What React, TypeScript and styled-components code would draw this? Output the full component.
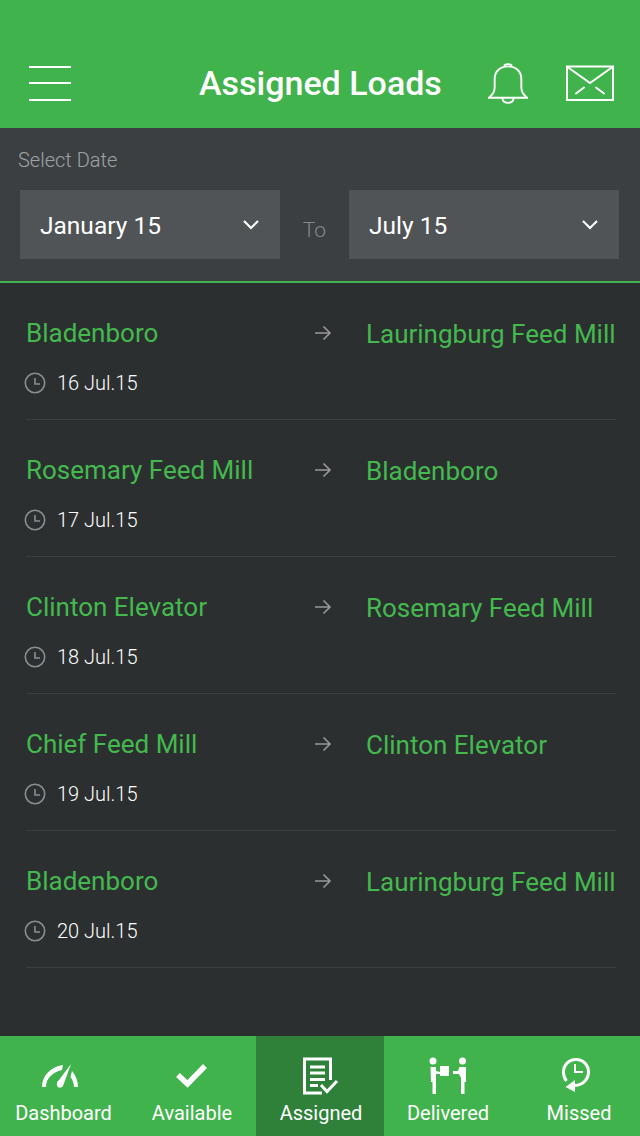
import styled, { createGlobalStyle } from 'styled-components';

const Global = createGlobalStyle`
  html, body {
    margin: 0;
    padding: 0;
    background: #2c2f30;
    font-family: Roboto, "Liberation Sans", sans-serif;
  }
  * { box-sizing: border-box; }
`;

const S = {
  Page: styled.div`
    width: 640px;
    height: 1136px;
    display: flex;
    flex-direction: column;
    overflow: hidden;
    background: #2c2f30;
  `,
  Header: styled.header`
    flex: 0 0 128px;
    background: #41b34c;
    display: grid;
    grid-template-columns: 166px 1fr 96px;
    align-items: center;
    padding: 38px 26px 0 29px;
    color: #fff;
  `,
  Burger: styled.div`
    width: 42px;
    height: 35px;
    display: flex;
    flex-direction: column;
    justify-content: space-between;
    span {
      height: 2px;
      background: #fff;
    }
  `,
  Title: styled.h1`
    margin: 0;
    font-size: 34px;
    font-weight: 500;
    line-height: 40px;
    white-space: nowrap;
    padding-left: 4px;
  `,
  HeaderIcons: styled.div`
    display: flex;
    justify-content: space-between;
    align-items: center;
    margin-left: -30px;
    width: 126px;
  `,
  Filter: styled.section`
    flex: 0 0 155px;
    background: #3b3f42;
    border-bottom: 2px solid #41b34c;
    padding: 20px 21px 0 18px;
  `,
  FilterLabel: styled.div`
    font-size: 20px;
    font-weight: 300;
    line-height: 24px;
    color: #a0a3a5;
  `,
  FilterRow: styled.div`
    display: grid;
    grid-template-columns: 260px 69px 270px;
    margin: 18px 0 0 2px;
    height: 69px;
  `,
  Select: styled.div`
    background: #505456;
    display: flex;
    align-items: center;
    justify-content: space-between;
    padding: 2px 20px 0 20px;
    font-size: 24.5px;
    color: #fff;
  `,
  ToLabel: styled.div`
    font-size: 21px;
    font-weight: 300;
    color: #85898b;
    text-align: center;
    align-self: center;
    padding-top: 11px;
  `,
  List: styled.main`
    flex: 1;
    padding: 0 24px 0 26px;
  `,
  Row: styled.article`
    height: 137px;
    border-bottom: 1px solid #3b3f41;
    display: grid;
    grid-template-columns: 340px 1fr;
    grid-template-rows: 66px 34px;
    align-content: start;
    padding-top: 17px;
  `,
  Origin: styled.div`
    position: relative;
    font-size: 26px;
    line-height: 66px;
    height: 66px;
    color: #43b94e;
    white-space: nowrap;
  `,
  Arrow: styled.svg`
    position: absolute;
    left: 288px;
    top: 25px;
  `,
  Destination: styled.div`
    font-size: 26px;
    line-height: 66px;
    padding-top: 1px;
    color: #43b94e;
    white-space: nowrap;
  `,
  DateRow: styled.div`
    grid-column: 1 / -1;
    display: flex;
    align-items: center;
    gap: 11px;
    margin-left: -2px;
    font-size: 20px;
    font-weight: 300;
    color: #fff;
  `,
  TabBar: styled.nav`
    flex: 0 0 100px;
    background: #41b34c;
    display: grid;
    grid-template-columns: repeat(5, 1fr);
  `,
  Tab: styled.div<{ $active?: boolean }>`
    background: ${({ $active }) => ($active ? '#2f8139' : 'transparent')};
    display: flex;
    flex-direction: column;
    align-items: center;
    color: #fff;
    padding-top: 20px;
  `,
  TabIcon: styled.svg<{ $nudge?: number }>`
    display: block;
    height: 40px;
    margin-bottom: 5px;
    margin-right: ${({ $nudge }) => $nudge ?? 0}px;
  `,
  TabLabel: styled.span<{ $nudge?: number }>`
    font-size: 20px;
    line-height: 24px;
    margin-left: ${({ $nudge }) => $nudge ?? 0}px;
  `,
};

const rows = [
  { from: 'Bladenboro', to: 'Lauringburg Feed Mill', date: '16 Jul.15' },
  { from: 'Rosemary Feed Mill', to: 'Bladenboro', date: '17 Jul.15' },
  { from: 'Clinton Elevator', to: 'Rosemary Feed Mill', date: '18 Jul.15' },
  { from: 'Chief Feed Mill', to: 'Clinton Elevator', date: '19 Jul.15' },
  { from: 'Bladenboro', to: 'Lauringburg Feed Mill', date: '20 Jul.15' },
];

const Chevron = () => (
  <svg width="18" height="12" viewBox="0 0 18 12" fill="none" stroke="#fff" strokeWidth="2.2">
    <path d="M2 1 L9 8 L16 1" />
  </svg>
);

const Clock = () => (
  <svg width="22" height="22" viewBox="0 0 22 22" fill="none" stroke="#8b8e90" strokeWidth="1.6">
    <circle cx="11" cy="11" r="9.7" />
    <path d="M11 6 V12 H16" />
  </svg>
);

const App = () => (
  <S.Page>
    <Global />
    <S.Header>
      <S.Burger>
        <span />
        <span />
        <span />
      </S.Burger>
      <S.Title>Assigned Loads</S.Title>
      <S.HeaderIcons>
        <svg width="40" height="43" viewBox="0 0 42 44" fill="none" stroke="#fff" strokeWidth="2">
          <path d="M1 37 C3 35 7 33 7 26 V17 C7 9 13 4 21 4 C29 4 35 9 35 17 V26 C35 33 39 35 41 37 Z" />
          <path d="M17 3.5 C18 1 24 1 25 3.5" />
          <path d="M15 37.5 C16 44 26 44 27 37.5" />
        </svg>
        <svg width="48" height="36" viewBox="0 0 48 36" fill="none" stroke="#fff" strokeWidth="2">
          <path d="M1 1.500 H47 V35 H1 Z" />
          <path d="M1.500 2 L24 18 L46.500 2" />
          <path d="M10 28.500 L18 22.500 M38 28.500 L30 22.500" strokeLinecap="round" />
        </svg>
      </S.HeaderIcons>
    </S.Header>
    <S.Filter>
      <S.FilterLabel>Select Date</S.FilterLabel>
      <S.FilterRow>
        <S.Select>
          January 15
          <Chevron />
        </S.Select>
        <S.ToLabel>To</S.ToLabel>
        <S.Select>
          July 15
          <Chevron />
        </S.Select>
      </S.FilterRow>
    </S.Filter>
    <S.List>
      {rows.map((row) => (
        <S.Row key={row.date}>
          <S.Origin>
            {row.from}
            <S.Arrow width="18" height="16" viewBox="0 0 18 16" fill="none" stroke="#97999b" strokeWidth="1.600">
              <path d="M1 8 H16 M9.500 1.500 L16 8 L9.500 14.500" />
            </S.Arrow>
          </S.Origin>
          <S.Destination>{row.to}</S.Destination>
          <S.DateRow>
            <Clock />
            {row.date}
          </S.DateRow>
        </S.Row>
      ))}
    </S.List>
    <S.TabBar>
      <S.Tab>
        <S.TabIcon $nudge={8} width="38" height="40" viewBox="0 0 38 40" fill="#fff">
          <path d="M1 31 C1 20 9 11 22 9 L21 14 C12 16 5 22 5 31 Z" />
          <path d="M30 8 L22 30 C20 33 15 32 16 27 C16 26 17 25 18 24 Z" />
          <path d="M31 15 C35 20 37 25 37 31 H33 C33 27 31.500 24 29.500 21 Z" />
        </S.TabIcon>
        <S.TabLabel $nudge={-1}>Dashboard</S.TabLabel>
      </S.Tab>
      <S.Tab>
        <S.TabIcon width="34" height="40" viewBox="0 0 34 40" fill="none" stroke="#fff" strokeWidth="5.500">
          <path d="M3 19 L12.500 28 L30 10" />
        </S.TabIcon>
        <S.TabLabel>Available</S.TabLabel>
      </S.Tab>
      <S.Tab $active>
        <S.TabIcon width="38" height="40" viewBox="0 0 38 40" fill="none" stroke="#fff" strokeWidth="3">
          <path d="M21 37 H3.500 V3 H29.500 V24" />
          <path d="M9 11 H24 M9 17 H24 M9 23.500 H24 M9 29.500 H17" />
          <path d="M20 29 L26 35.500 L36 25" />
        </S.TabIcon>
        <S.TabLabel $nudge={2}>Assigned</S.TabLabel>
      </S.Tab>
      <S.Tab>
        <S.TabIcon width="38" height="40" viewBox="0 0 38 40" fill="#fff">
          <circle cx="4" cy="5" r="3.500" />
          <circle cx="33.500" cy="5" r="3.500" />
          <path d="M1.500 11 H7 V15 L11 16 V18 H7 V38 H3.500 V26 H2 Z" />
          <path d="M11 10 H20 V20 H11 Z" />
          <path d="M24 15 H29 L30.500 11 H37 V26 H35.500 V38 H32 V22 L30 18 H24 Z" />
        </S.TabIcon>
        <S.TabLabel>Delivered</S.TabLabel>
      </S.Tab>
      <S.Tab>
        <S.TabIcon width="30" height="40" viewBox="0 0 30 40" fill="none" stroke="#fff" strokeWidth="3">
          <path d="M5.500 25 C3 22 2.500 19 2.500 16 C2.500 9 8 3.500 15 3.500 C22 3.500 27.500 9 27.500 16 C27.500 23 22 29 14 29.500" />
          <path d="M14 8 V16 H22" strokeWidth="2" />
          <path d="M14 24 V36 L4.500 31 Z" fill="#fff" stroke="none" />
        </S.TabIcon>
        <S.TabLabel $nudge={6}>Missed</S.TabLabel>
      </S.Tab>
    </S.TabBar>
  </S.Page>
);

export default App;
